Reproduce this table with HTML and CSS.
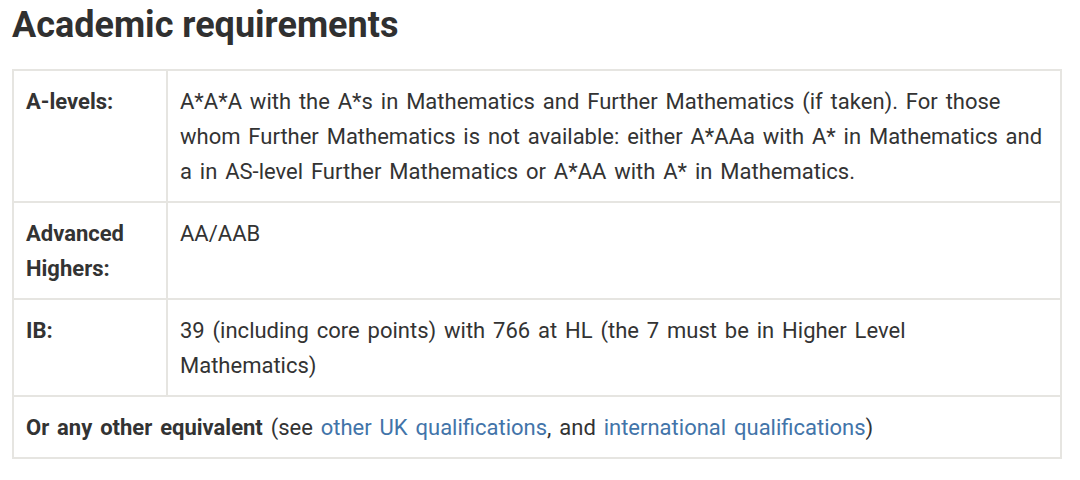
FILE: index.html
```html
<!DOCTYPE html>
<html lang="en">
<head>
<meta charset="utf-8">
<title>Academic requirements</title>
<link rel="stylesheet" href="styles.css">
</head>
<body>
<main class="page">
  <h2 class="title">Academic requirements</h2>
  <table class="reqs">
    <tr>
      <th class="label">A-levels:</th>
      <td class="value">A*A*A with the A*s in Mathematics and Further Mathematics (if taken). For those whom Further Mathematics is not available: either A*AAa with A* in Mathematics and a in AS-level Further Mathematics or A*AA with A* in Mathematics.</td>
    </tr>
    <tr>
      <th class="label">Advanced Highers:</th>
      <td class="value">AA/AAB</td>
    </tr>
    <tr>
      <th class="label">IB:</th>
      <td class="value">39 (including core points) with 766 at HL (the 7 must be in Higher Level Mathematics)</td>
    </tr>
    <tr>
      <td class="full" colspan="2"><strong>Or any other equivalent</strong> (see <a href="#">other UK qualifications</a>, and <a href="#">international qualifications</a>)</td>
    </tr>
  </table>
</main>
</body>
</html>
```
FILE: styles.css
```css
html, body {
  margin: 0;
  padding: 0;
  background: #ffffff;
}
body {
  font-family: "Roboto", "Open Sans", sans-serif;
  color: #333333;
}
.page {
  padding: 0 18px 0 12px;
}
.title {
  margin: 0;
  padding-top: 3px;
  height: 66px;
  font-size: 36px;
  line-height: 44px;
  font-weight: 700;
  color: #303030;
}
.reqs {
  width: 100%;
  border-collapse: collapse;
  border: 2px solid #e6e5e1;
  font-size: 22px;
  line-height: 35px;
  word-spacing: 2.4px;
}
.reqs th, .reqs td {
  border: 2px solid #e6e5e1;
  padding: 13px 12px 12px 12px;
  vertical-align: top;
  text-align: left;
}
.label {
  width: 128px;
  font-weight: 700;
}
.reqs .value {
  padding-right: 14px;
}
.full strong {
  font-weight: 700;
}
.reqs a {
  color: #4274a9;
  text-decoration: none;
}
```
